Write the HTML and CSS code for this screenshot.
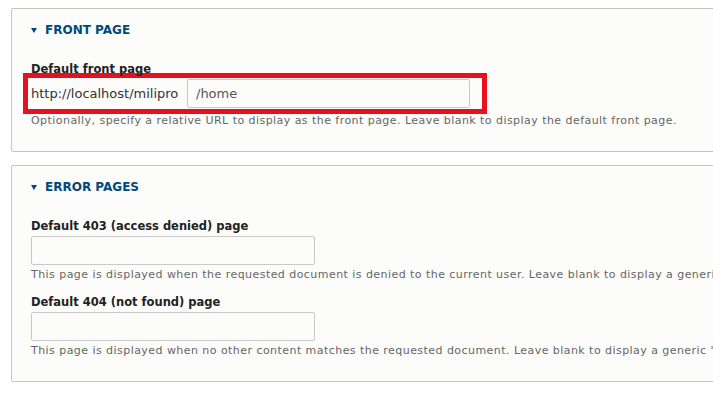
FILE: index.html
```html
<!DOCTYPE html>
<html lang="en">
<head>
  <meta charset="UTF-8" />
  <title>Site details</title>
  <link rel="stylesheet" href="styles.css">
</head>
<body>

  <div class="page">
    <details class="panel" open>
      <summary class="panel-title">FRONT PAGE</summary>
      <div class="panel-body">
        <div class="field">
          <label class="field-label" for="front">Default front page</label>
          <div class="highlight">
            <span class="prefix">http://localhost/milipro</span>
            <input class="text-input wide" id="front" type="text" value="/home">
          </div>
          <p class="desc tight">Optionally, specify a relative URL to display as the front page. Leave blank to display the default front page.</p>
        </div>
      </div>
    </details>

    <details class="panel" open>
      <summary class="panel-title">ERROR PAGES</summary>
      <div class="panel-body">
        <div class="field">
          <label class="field-label" for="e403">Default 403 (access denied) page</label>
          <input class="text-input" id="e403" type="text">
          <p class="desc">This page is displayed when the requested document is denied to the current user. Leave blank to display a generic "access denied" page.</p>
        </div>

        <div class="field">
          <label class="field-label" for="e404">Default 404 (not found) page</label>
          <input class="text-input" id="e404" type="text">
          <p class="desc">This page is displayed when no other content matches the requested document. Leave blank to display a generic "page not found" page.</p>
        </div>
      </div>
    </details>
  </div>

</body>
</html>
```

FILE: styles.css
```css
* {
  margin: 0;
  padding: 0;
  box-sizing: border-box;
}

html, body {
  background: #fff;
  overflow: hidden;
}

body {
  font-family: 'DejaVu Sans', Verdana, sans-serif;
  color: #333;
}

.page {
  width: 1000px;
  padding: 8px 0 0 11px;
  display: flex;
  flex-direction: column;
  gap: 13px;
}

.panel {
  background: #fcfcfa;
  border: 1px solid #c4c4c4;
  border-radius: 2px;
}

.panel-title {
  list-style: none;
  display: flex;
  align-items: center;
  gap: 8px;
  padding: 11px 20px 0 19px;
  font-size: 12px;
  font-weight: bold;
  color: #00497a;
  height: 31px;
}

.panel-title::-webkit-details-marker {
  display: none;
}

.panel-title::before {
  content: "";
  border-left: 3px solid transparent;
  border-right: 3px solid transparent;
  border-top: 5px solid #00497a;
}

.panel-body {
  padding: 22px 20px 23px 19px;
  display: flex;
  flex-direction: column;
  gap: 13px;
}

.field-label {
  display: block;
  font-size: 11.5px;
  font-weight: bold;
  color: #222;
  line-height: 15px;
}

.highlight {
  display: flex;
  align-items: center;
  width: 464px;
  height: 41px;
  margin: -4px 0 0 -8px;
  padding: 0 12px 0 3px;
  border: 5px solid #e8101f;
  font-size: 13px;
  color: #333;
}

.text-input {
  display: block;
  width: 284px;
  height: 29px;
  margin-top: 2px;
  border: 1px solid #c9c9c9;
  border-radius: 2px;
  background: #fcfcfa;
  font: 13px 'DejaVu Sans', Verdana, sans-serif;
  color: #555;
  padding: 0 8px;
}

.text-input.wide {
  width: 283px;
  margin: 0 0 0 auto;
}

.desc {
  font-size: 11px;
  letter-spacing: 0.45px;
  color: #666;
  line-height: 14px;
  margin-top: 3px;
  white-space: nowrap;
}

.desc.tight {
  margin-top: 0;
}
```
